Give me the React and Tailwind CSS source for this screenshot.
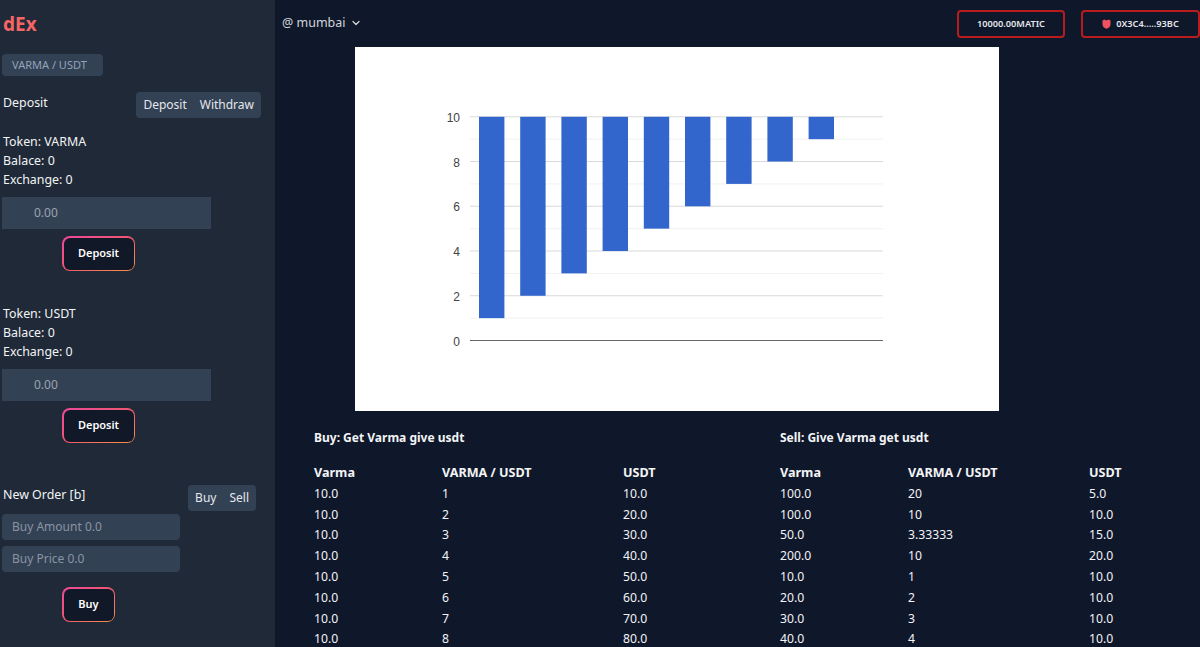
import { ChevronDown } from "lucide-react";

const BUY = [
  ["10.0", "1", "10.0"],
  ["10.0", "2", "20.0"],
  ["10.0", "3", "30.0"],
  ["10.0", "4", "40.0"],
  ["10.0", "5", "50.0"],
  ["10.0", "6", "60.0"],
  ["10.0", "7", "70.0"],
  ["10.0", "8", "80.0"],
];

const SELL = [
  ["100.0", "20", "5.0"],
  ["100.0", "10", "10.0"],
  ["50.0", "3.33333", "15.0"],
  ["200.0", "10", "20.0"],
  ["10.0", "1", "10.0"],
  ["20.0", "2", "10.0"],
  ["30.0", "3", "10.0"],
  ["40.0", "4", "10.0"],
];

function GradientButton({ label, width }) {
  return (
    <div className={`${width} h-[35px] rounded-lg p-[1.5px] bg-gradient-to-br from-[#ec4899] via-[#f0576f] to-[#fb923c]`}>
      <button className="w-full h-full rounded-[6px] bg-[#111827] text-white text-[11px] font-semibold">{label}</button>
    </div>
  );
}

function Toggle({ items }) {
  return (
    <div className="flex h-[26px] items-center gap-[13px] rounded bg-[#334155] px-[7px] text-xs text-[#e5e7eb]">
      {items.map((t) => (
        <span key={t}>{t}</span>
      ))}
    </div>
  );
}

function TokenBox({ token, className }) {
  return (
    <div className={className}>
      <div className="pl-px text-[12.4px] leading-[19px] text-[#f3f4f6]">
        <p>Token: {token}</p>
        <p>Balace: 0</p>
        <p>Exchange: 0</p>
      </div>
      <div className="mt-2 flex h-8 w-[209px] items-center bg-[#334155] pl-8 text-xs text-[#9ca3af]">0.00</div>
      <div className="mt-[7px] ml-[60px]">
        <GradientButton label="Deposit" width="w-[73px]" />
      </div>
    </div>
  );
}

function Sidebar() {
  return (
    <aside className="w-[275px] shrink-0 bg-[#1f2937] pl-[2px] pt-[13px]">
      <h1 className="pl-px text-[19px] leading-[22px] font-bold text-[#f56565]">dEx</h1>
      <div className="mt-[19px] flex h-[22px] w-[101px] items-center rounded bg-[#334155] pl-[10px] text-[11px] text-[#94a3b8]">VARMA / USDT</div>
      <div className="mt-4 flex w-[259px] items-start justify-between">
        <span className="mt-[2px] pl-px text-[12.4px] text-[#f3f4f6]">Deposit</span>
        <Toggle items={["Deposit", "Withdraw"]} />
      </div>
      <TokenBox token="VARMA" className="mt-[14px]" />
      <TokenBox token="USDT" className="mt-[33px]" />
      <div className="mt-[42px] flex w-[254px] items-start justify-between">
        <span className="mt-[1px] pl-px text-[12.4px] text-[#f3f4f6]">New Order [b]</span>
        <Toggle items={["Buy", "Sell"]} />
      </div>
      <div className="mt-[3px] flex h-[26px] w-[178px] items-center rounded bg-[#334155] pl-[10px] text-xs text-[#8a94a3]">Buy Amount 0.0</div>
      <div className="mt-[6px] flex h-[26px] w-[178px] items-center rounded bg-[#334155] pl-[10px] text-xs text-[#8a94a3]">Buy Price 0.0</div>
      <div className="mt-[15px] ml-[60px]">
        <GradientButton label="Buy" width="w-[53px]" />
      </div>
    </aside>
  );
}

function Chart() {
  const left = 115;
  const right = 528;
  const zero = 293.5;
  const unit = 22.37;
  const bars = [1, 2, 3, 4, 5, 6, 7, 8, 9];
  return (
    <svg width="644" height="364" viewBox="0 0 644 364" className="block">
      {[1, 3, 5, 7, 9].map((v) => (
        <line key={v} x1={left} x2={right} y1={zero - v * unit} y2={zero - v * unit} stroke="#f1f1f1" />
      ))}
      {[2, 4, 6, 8, 10].map((v) => (
        <line key={v} x1={left} x2={right} y1={zero - v * unit} y2={zero - v * unit} stroke="#d9d9d9" />
      ))}
      {bars.map((v, i) => (
        <rect key={v} x={124 + i * 41.2} y={zero - 10 * unit} width="25.4" height={(10 - v) * unit} fill="#3366cc" />
      ))}
      <line x1={left} x2={right} y1={zero} y2={zero} stroke="#666666" />
      {[0, 2, 4, 6, 8, 10].map((v) => (
        <text key={v} x="105" y={zero - v * unit + 5} textAnchor="end" fontSize="12" fill="#444444" fontFamily="Liberation Sans, sans-serif">{v}</text>
      ))}
    </svg>
  );
}

function OrderTable({ title, rows, className }) {
  return (
    <div className={className}>
      <p className="text-xs leading-5 font-bold text-[#f3f4f6]">{title}</p>
      <div className="mt-[15px] grid grid-cols-[128px_181px_1fr] text-[12.2px] leading-[20.8px] text-[#f3f4f6]">
        <span className="text-[12.6px] font-bold">Varma</span>
        <span className="text-[12.6px] font-bold">VARMA / USDT</span>
        <span className="text-[12.6px] font-bold">USDT</span>
        {rows.map((r, i) => (
          <div key={i} className="contents">
            <span>{r[0]}</span>
            <span>{r[1]}</span>
            <span>{r[2]}</span>
          </div>
        ))}
      </div>
    </div>
  );
}

export default function App() {
  return (
    <div className="flex h-screen overflow-hidden bg-[#0f172a] font-['Noto_Sans','Open_Sans',sans-serif]">
      <Sidebar />
      <main className="min-w-0 flex-1">
        <header className="flex h-[47px] items-start pt-[10px]">
          <div className="ml-[7px] mt-[4px] flex items-center text-[12.5px] text-[#d1d5db]">
            @ mumbai
            <ChevronDown className="ml-[4px] h-3 w-3" strokeWidth={2.5} />
          </div>
          <div className="ml-auto flex gap-4">
            <div className="flex h-[28px] w-[108px] items-center justify-center rounded border-2 border-[#b91c1c] text-[9.2px] font-semibold text-[#e5e7eb]">10000.00MATIC</div>
            <div className="flex h-[28px] w-[119px] items-center justify-center gap-[5px] rounded border-2 border-[#b91c1c] text-[9.2px] font-semibold text-[#e5e7eb]">
              <svg width="9" height="10" viewBox="0 0 9 10">
                <path d="M0.5 1.5 L2.5 0.5 L4.5 1.5 L6.5 0.5 L8.5 1.5 L8.5 5.5 C8.5 8 6 9.5 4.5 9.8 C3 9.5 0.5 8 0.5 5.5 Z" fill="#f0525f" />
              </svg>
              0X3C4.....93BC
            </div>
          </div>
        </header>
        <div className="ml-[80px] w-[644px] bg-white">
          <Chart />
        </div>
        <div className="mt-[17px] flex pl-[39px]">
          <OrderTable title="Buy: Get Varma give usdt" rows={BUY} className="w-[466px]" />
          <OrderTable title="Sell: Give Varma get usdt" rows={SELL} className="w-[420px]" />
        </div>
      </main>
    </div>
  );
}
